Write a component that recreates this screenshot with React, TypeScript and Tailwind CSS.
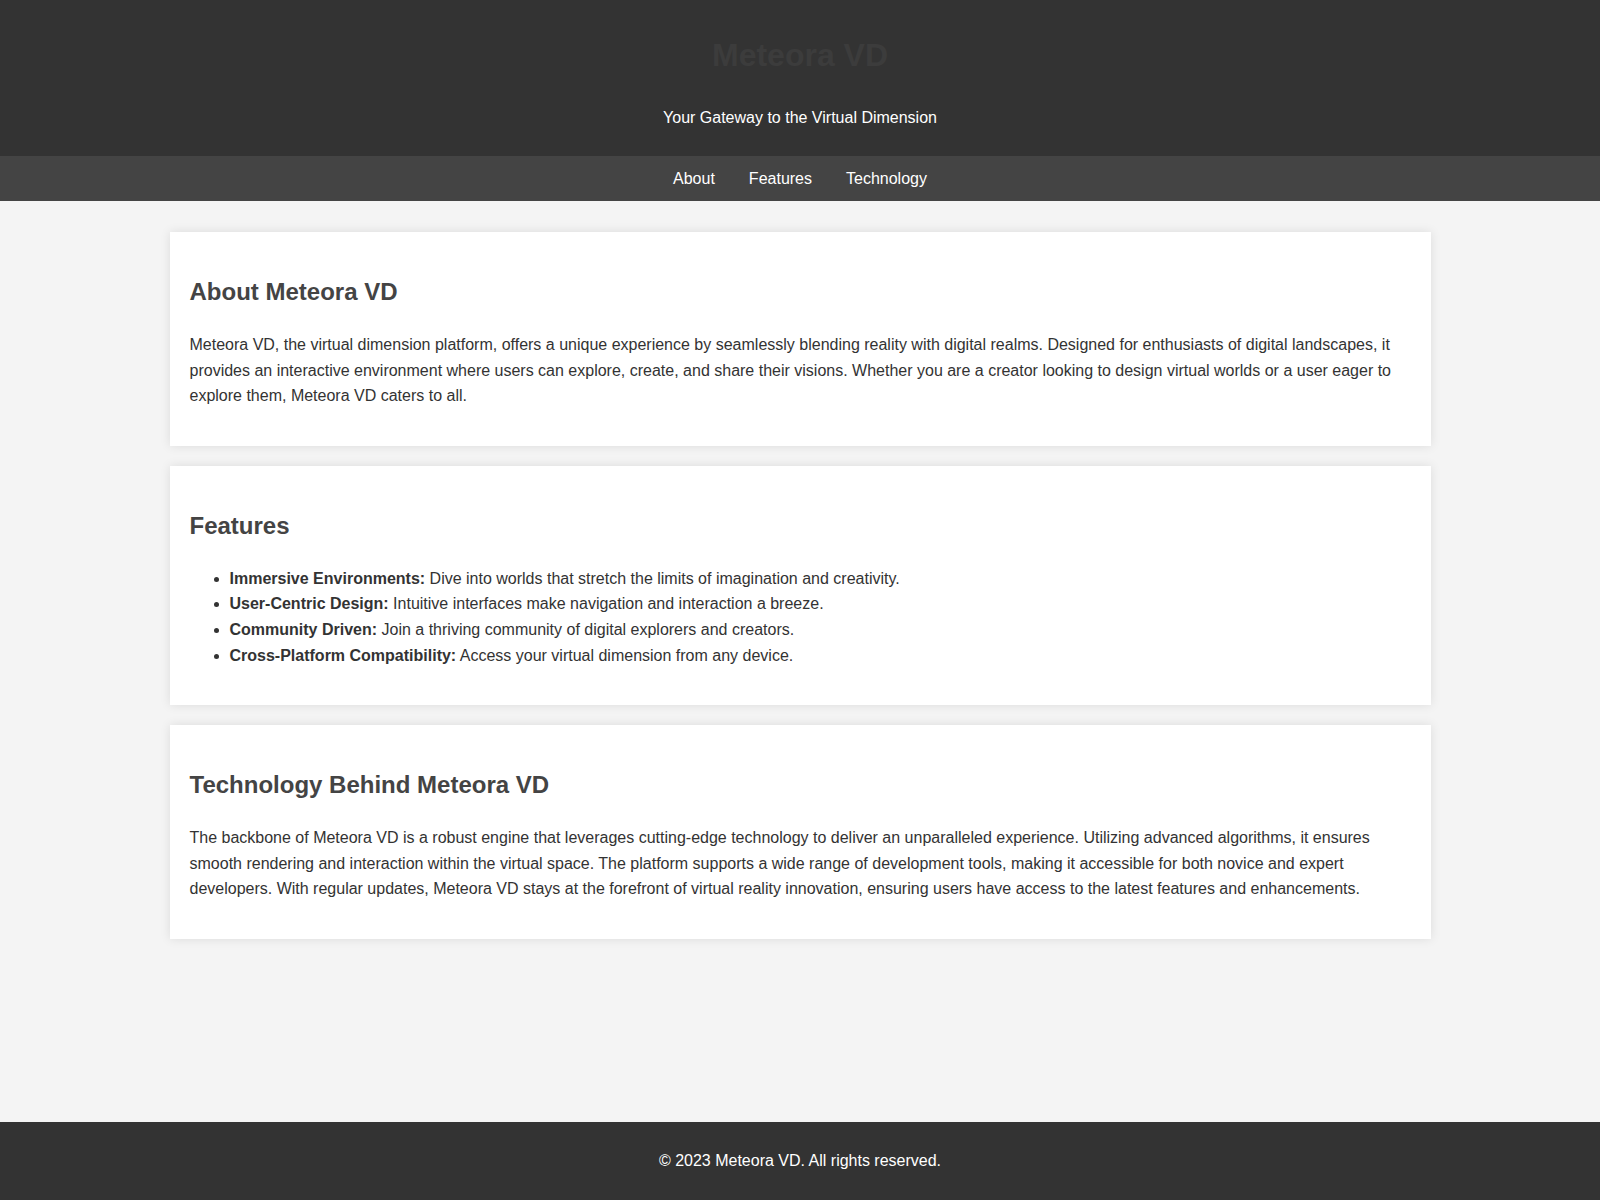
export default function App() {
  const features = [
    ['Immersive Environments:', 'Dive into worlds that stretch the limits of imagination and creativity.'],
    ['User-Centric Design:', 'Intuitive interfaces make navigation and interaction a breeze.'],
    ['Community Driven:', 'Join a thriving community of digital explorers and creators.'],
    ['Cross-Platform Compatibility:', 'Access your virtual dimension from any device.'],
  ];
  return (
    <div className="min-h-screen flex flex-col bg-[#f4f4f4] text-[#333] font-[family-name:Liberation_Sans,Arial,sans-serif] text-base">
      <header className="bg-[#333] text-white text-center h-[156px] flex flex-col items-center pt-[37px]">
        <h1 className="text-[32px] font-bold text-[#3c3c3c] leading-[37px]">Meteora VD</h1>
        <p className="mt-[32px]">Your Gateway to the Virtual Dimension</p>
      </header>
      <nav className="bg-[#444] h-[45px] flex items-center justify-center gap-[34px] text-white">
        <a>About</a>
        <a>Features</a>
        <a>Technology</a>
      </nav>
      <main className="w-[1261px] mx-auto mt-[31px] flex flex-col gap-[20px] flex-1 pb-[20px]">
        <section className="bg-white p-[20px] shadow-[0_0_10px_rgba(0,0,0,0.1)] pt-[44px] pb-[37px]">
          <h2 className="text-2xl font-bold text-[#444] mb-[24px]">About Meteora VD</h2>
          <p className="leading-[1.6]">
            Meteora VD, the virtual dimension platform, offers a unique experience by seamlessly blending reality with digital realms. Designed for enthusiasts of digital landscapes, it provides an interactive environment where users can explore, create, and share their visions. Whether you are a creator looking to design virtual worlds or a user eager to explore them, Meteora VD caters to all.
          </p>
        </section>
        <section className="bg-white p-[20px] shadow-[0_0_10px_rgba(0,0,0,0.1)] pt-[44px] pb-[37px]">
          <h2 className="text-2xl font-bold text-[#444] mb-[24px]">Features</h2>
          <ul className="list-disc pl-[40px] leading-[1.6]">
            {features.map(([b, t]) => (
              <li key={b}><strong>{b}</strong> {t}</li>
            ))}
          </ul>
        </section>
        <section className="bg-white p-[20px] shadow-[0_0_10px_rgba(0,0,0,0.1)] pt-[44px] pb-[37px]">
          <h2 className="text-2xl font-bold text-[#444] mb-[24px]">Technology Behind Meteora VD</h2>
          <p className="leading-[1.6]">
            The backbone of Meteora VD is a robust engine that leverages cutting-edge technology to deliver an unparalleled experience. Utilizing advanced algorithms, it ensures smooth rendering and interaction within the virtual space. The platform supports a wide range of development tools, making it accessible for both novice and expert developers. With regular updates, Meteora VD stays at the forefront of virtual reality innovation, ensuring users have access to the latest features and enhancements.
          </p>
        </section>
      </main>
      <footer className="bg-[#333] text-white text-center h-[78px] flex items-center justify-center">
        <p>© 2023 Meteora VD. All rights reserved.</p>
      </footer>
    </div>
  );
}
